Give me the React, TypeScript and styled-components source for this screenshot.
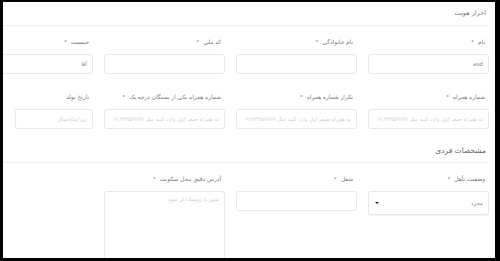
import React from 'react';
import styled, { createGlobalStyle } from 'styled-components';

/*
 * Global
 */

const GlobalStyle = createGlobalStyle`
  html, body {
    margin: 0;
    padding: 0;
    background: #000;
  }
  body {
    font-family: "DejaVu Sans", "Noto Sans", sans-serif;
  }
`;

/*
 * Data
 */

type Field = {
  label: string;
  required?: boolean;
  value?: string;
  placeholder?: string;
  kind?: 'input' | 'select' | 'textarea';
  width?: number;
};

const phoneHint = 'به همراه صفر اول وارد کنید مثل ۰۹۱۲۳۴۵۶۷۸۹';

const identityRows: Field[][] = [
  [
    { label: 'نام', required: true, value: 'asd' },
    { label: 'نام خانوادگی', required: true },
    { label: 'کد ملی', required: true },
    { label: 'جنسیت', required: true, value: 'آقا' },
  ],
  [
    { label: 'شماره همراه', required: true, placeholder: phoneHint },
    { label: 'تکرار شماره همراه', required: true, placeholder: phoneHint },
    { label: 'شماره همراه یکی از بستگان درجه یک', required: true, placeholder: phoneHint },
    { label: 'تاریخ تولد', placeholder: 'روز/ماه/سال', width: 78 },
  ],
];

const personalRows: Field[][] = [
  [
    { label: 'وضعیت تأهل', required: true, value: 'مجرد', kind: 'select' },
    { label: 'شغل', required: true },
    { label: 'آدرس دقیق محل سکونت', required: true, placeholder: 'شهر یا روستا ذکر شود', kind: 'textarea' },
  ],
];

/*
 * Components
 */

const FormField: React.FC<{ field: Field }> = ({ field }) => (
  <FieldBox>
    <Label>
      {field.label}
      {field.required && <Star>*</Star>}
    </Label>
    {field.kind === 'select' ? (
      <SelectBox>
        <span>{field.value}</span>
        <Caret />
      </SelectBox>
    ) : field.kind === 'textarea' ? (
      <TextArea placeholder={field.placeholder} readOnly />
    ) : (
      <Input
        $width={field.width}
        defaultValue={field.value}
        placeholder={field.placeholder}
        readOnly
      />
    )}
  </FieldBox>
);

export default function App() {
  return (
    <>
      <GlobalStyle />
      <Frame>
        <Card>
          <SectionTitle>احراز هویت</SectionTitle>
          <Rows>
            {identityRows.map((row, i) => (
              <Grid key={i}>
                {row.map((f) => (
                  <FormField key={f.label} field={f} />
                ))}
              </Grid>
            ))}
          </Rows>
          <SectionTitle $big>مشخصات فردی</SectionTitle>
          <Rows>
            {personalRows.map((row, i) => (
              <Grid key={i}>
                {row.map((f) => (
                  <FormField key={f.label} field={f} />
                ))}
              </Grid>
            ))}
          </Rows>
        </Card>
      </Frame>
    </>
  );
}

/*
 * Styles
 */

const Frame = styled.div`
  margin: 2px 5px 0 3px;
  height: 256px;
  background: #fff;
  overflow: hidden;
  direction: rtl;
`;

const Card = styled.div`
  padding-right: 6px;
`;

const SectionTitle = styled.div<{ $big?: boolean }>`
  height: ${(p) => (p.$big ? '22px' : '23px')};
  line-height: ${(p) => (p.$big ? '22px' : '23px')};
  margin-top: ${(p) => (p.$big ? '11px' : '0')};
  padding-right: 3px;
  font-size: ${(p) => (p.$big ? '7.5px' : '6.5px')};
  color: ${(p) => (p.$big ? '#666' : '#777')};
  border-bottom: 1px solid #eceef0;
  white-space: nowrap;
`;

const Rows = styled.div`
  display: flex;
  flex-direction: column;
  gap: 18px;
  padding-top: 11px;
`;

const Grid = styled.div`
  display: grid;
  grid-template-columns: repeat(4, 121.5px);
  column-gap: 10.5px;
  align-items: start;
`;

const FieldBox = styled.div`
  display: flex;
  flex-direction: column;
  align-items: flex-start;
`;

const Label = styled.div`
  height: 10px;
  line-height: 10px;
  margin-bottom: 7px;
  padding-right: 4px;
  font-size: 5.8px;
  color: #777;
  white-space: nowrap;
`;

const Star = styled.span`
  color: #f0506e;
  margin-right: 4px;
`;

const boxBase = `
  box-sizing: border-box;
  border: 1px solid #e6e8ea;
  border-radius: 3px;
  background: #fff;
  font-family: "DejaVu Sans", "Noto Sans", sans-serif;
  font-size: 5.5px;
  color: #888;
  direction: rtl;
  outline: none;
  margin: 0;
`;

const Input = styled.input<{ $width?: number }>`
  ${boxBase}
  width: ${(p) => (p.$width ? `${p.$width}px` : '100%')};
  height: 20px;
  padding: 0 5px;

  &::placeholder {
    color: #cfcfcf;
  }
`;

const SelectBox = styled.div`
  ${boxBase}
  width: 100%;
  height: 24px;
  padding: 0 5px;
  display: flex;
  align-items: center;
  justify-content: space-between;
  box-shadow: 0 1px 2px rgba(0, 0, 0, 0.06);
`;

const Caret = styled.span`
  width: 0;
  height: 0;
  margin-left: 1px;
  border-left: 2px solid transparent;
  border-right: 2px solid transparent;
  border-top: 2.5px solid #222;
`;

const TextArea = styled.textarea`
  ${boxBase}
  width: 100%;
  height: 80px;
  padding: 4px 5px;
  resize: none;

  &::placeholder {
    color: #cfcfcf;
  }
`;
